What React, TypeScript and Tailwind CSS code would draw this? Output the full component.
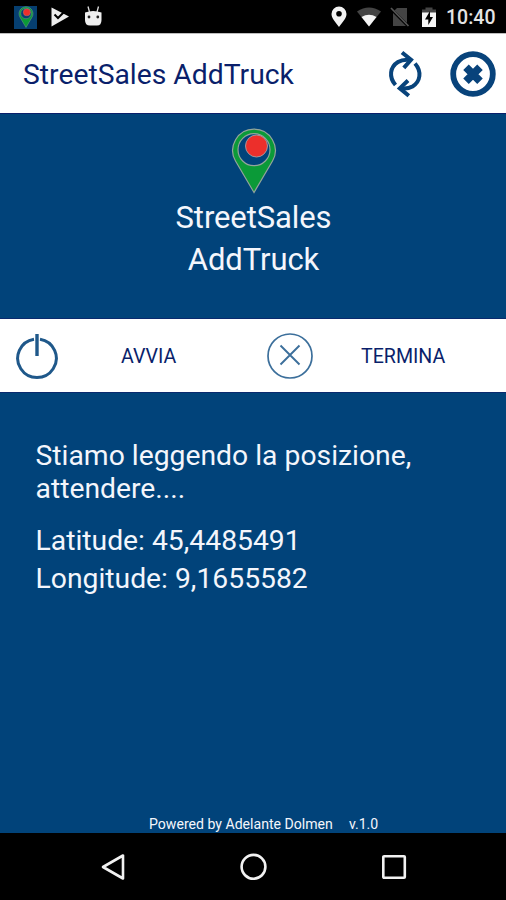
import React from "react";

function PinLogo({ className }: { className?: string }) {
  return (
    <svg className={className} viewBox="0 0 46 67" fill="none">
      <path
        d="M23 65.5 L4.5 34 A21.3 21.3 0 1 1 41.5 34 Z M23 6.7 A16 16 0 1 0 23 38.7 A16 16 0 1 0 23 6.7 Z"
        fill="#0b9a38"
        fillRule="evenodd"
        stroke="#93a49b"
        strokeWidth="1.2"
      />
      <circle cx="25.5" cy="19" r="11" fill="#ec2f2b" stroke="#a3a0a6" strokeWidth="0.9" />
    </svg>
  );
}

function StatusBar() {
  return (
    <div className="flex h-[34px] shrink-0 items-center border-b border-[#bdbdbd] bg-black pl-[14px] pr-[10px] pt-px">
      <div className="flex h-[23px] w-[23px] items-center justify-center bg-[#063f70]">
        <PinLogo className="h-[22px] w-[16px]" />
      </div>
      <svg className="ml-[13px] h-[22px] w-5" viewBox="0 0 20 22">
        <path d="M1.5 1.5 L19 10.5 L1.5 20.5 Z" fill="#eeeeee" />
        <path d="M4.5 8.5 L8 12 L16.5 3.5" fill="none" stroke="#000" strokeWidth="2" />
      </svg>
      <svg className="ml-[13px] h-[22px] w-5" viewBox="0 0 20 22">
        <path d="M5 0.5 L6.5 6 M15.5 0.5 L14 6" stroke="#dddddd" strokeWidth="1.3" />
        <path d="M2 6.5 Q10 3.5 18.5 6.5 V14 Q18.5 19.5 14 19.5 H7 Q2 19.5 2 14 Z" fill="#eeeeee" />
        <circle cx="6" cy="11" r="1.4" fill="#222" />
        <circle cx="14.8" cy="11" r="1.4" fill="#222" />
      </svg>

      <svg className="ml-auto h-[22px] w-4" viewBox="0 0 16 22">
        <path
          d="M8 21 C4 15.5 .5 12 .5 8 A7.5 7.5 0 0 1 15.5 8 C15.5 12 12 15.5 8 21 Z M8 5 A2.8 2.8 0 1 0 8 10.6 A2.8 2.8 0 1 0 8 5 Z"
          fill="#f2f2f2"
          fillRule="evenodd"
        />
      </svg>
      <svg className="ml-[9px] h-[22px] w-[26px]" viewBox="0 0 26 22">
        <path d="M13 20.5 L1 5.5 Q13 -2.5 25 5.5 Z" fill="#444444" />
        <path d="M13 20.5 L5.5 11 Q13 6.5 20.5 11 Z" fill="#f5f5f5" />
      </svg>
      <svg className="ml-[8px] h-[22px] w-5" viewBox="0 0 20 22">
        <path d="M7 2 H17 V20 H3 V6 Z" fill="#444444" />
        <path d="M0 2 L18.5 20.5" stroke="#000" strokeWidth="3" />
        <path d="M1 2 L18.5 20" stroke="#555555" strokeWidth="1.7" />
      </svg>
      <svg className="ml-[11px] h-[22px] w-4" viewBox="0 0 16 22">
        <path d="M4.5 1.5 H11.5 V3.5 H15 V8 H1 V3.5 H4.5 Z" fill="#444444" />
        <path d="M1 6.5 H15 V21 H1 Z" fill="#f5f5f5" />
        <path d="M9 5 L4 13.5 H7.3 V19 L12 11 H9 Z" fill="#000" />
      </svg>
      <span className="ml-[9px] w-[50px] whitespace-nowrap pt-0.5 text-[19.5px] font-medium leading-none text-[#e4e4e4]">
        10:40
      </span>
    </div>
  );
}

function Header() {
  return (
    <header className="flex h-[79px] shrink-0 items-center bg-white pl-[23px] pr-[10px]">
      <h1 className="pt-[3px] text-[28.3px] leading-none text-[#0a1f6b]">
        StreetSales AddTruck
      </h1>
      <button className="ml-auto" aria-label="Aggiorna">
        <svg
          className="h-[48px] w-[36px]"
          viewBox="0 0 36 48"
          fill="none"
          stroke="#08437b"
          strokeWidth="4"
        >
          <path d="M8.5 35 C1.5 27 3 17 11 12 C14.5 9.8 18.5 9.3 23 9.8" />
          <path d="M15 2.5 L24 9.8 L16.8 17.8" />
          <path d="M28 13.5 C35 21.5 33.5 31.5 25.5 36.5 C22 38.5 18 39 13.5 38.3" />
          <path d="M21 30.5 L12.8 38.3 L21.8 45.8" />
        </svg>
      </button>
      <button className="ml-[27px]" aria-label="Chiudi">
        <svg className="h-[46px] w-[46px]" viewBox="0 0 46 46" fill="none" stroke="#08437b">
          <circle cx="23" cy="23" r="19.8" strokeWidth="5.8" />
          <path d="M16 16.2 L30 30.2 M30 16.2 L16 30.2" strokeWidth="7.8" />
        </svg>
      </button>
    </header>
  );
}

function Actions() {
  return (
    <div className="grid h-[75px] shrink-0 grid-cols-2 border-y border-[#0a2a6e] bg-white text-[19.6px] text-[#0a1f6b]">
      <button className="flex items-center pl-[15px]">
        <svg className="h-[48px] w-[44px]" viewBox="0 0 44 48" fill="none" stroke="#1f588a">
          <path d="M19 7.2 A19.3 19.3 0 1 0 25 7.2" strokeWidth="3" />
          <path d="M22 2 V24" strokeWidth="3.4" />
        </svg>
        <span className="ml-[62px] pt-0.5">AVVIA</span>
      </button>
      <button className="flex items-center pl-[14px]">
        <svg className="h-[46px] w-[46px]" viewBox="0 0 46 46" fill="none" stroke="#3c6f9b">
          <circle cx="23" cy="23" r="22" strokeWidth="1.7" />
          <path d="M13.5 12.5 L32.5 31.5 M32.5 12.5 L13.5 31.5" strokeWidth="1.9" />
        </svg>
        <span className="ml-[48px] pt-0.5">TERMINA</span>
      </button>
    </div>
  );
}

function NavBar() {
  return (
    <nav className="flex h-[67px] shrink-0 items-center justify-between bg-black pl-[100px] pr-[98px]">
      <svg className="h-7 w-7" viewBox="0 0 28 28" fill="none" stroke="#f2f2f2" strokeWidth="2.6">
        <path d="M3 14 L23 2.5 V25.5 Z" strokeLinejoin="round" />
      </svg>
      <svg className="h-7 w-7" viewBox="0 0 28 28" fill="none" stroke="#f2f2f2" strokeWidth="2.6">
        <circle cx="13.5" cy="13.8" r="11.9" />
      </svg>
      <svg className="h-7 w-7" viewBox="0 0 28 28" fill="none" stroke="#f2f2f2" strokeWidth="2.6">
        <rect x="3.3" y="3.3" width="21.5" height="21.5" rx="0.8" />
      </svg>
    </nav>
  );
}

export default function App() {
  return (
    <div className="flex h-[900px] w-[506px] flex-col overflow-hidden bg-[#01437a] font-['Roboto',sans-serif] text-[#f4f6fc]">
      <StatusBar />
      <Header />

      {/* Logo */}
      <section className="flex h-[205px] shrink-0 flex-col items-center border-t border-[#0a1f6b] pl-px pt-[13px]">
        <PinLogo className="h-[67px] w-[46px]" />
        <div className="mt-[3px] text-center text-[31px] leading-[41.5px] tracking-[-0.1px]">
          <p>StreetSales</p>
          <p>AddTruck</p>
        </div>
      </section>

      <Actions />

      {/* Position */}
      <main className="flex flex-1 flex-col pl-[35.5px] pt-[46px] text-[28.3px] leading-[33px]">
        <p className="w-[400px]">Stiamo leggendo la posizione, attendere....</p>
        <div className="mt-[17px] leading-[38px]">
          <p>Latitude: 45,4485491</p>
          <p>Longitude: 9,1655582</p>
        </div>
        <footer className="mt-auto flex h-[18px] items-center gap-4 pl-[113.5px] text-[14.1px] leading-none">
          <span>Powered by Adelante Dolmen</span>
          <span>v.1.0</span>
        </footer>
      </main>

      <NavBar />
    </div>
  );
}
